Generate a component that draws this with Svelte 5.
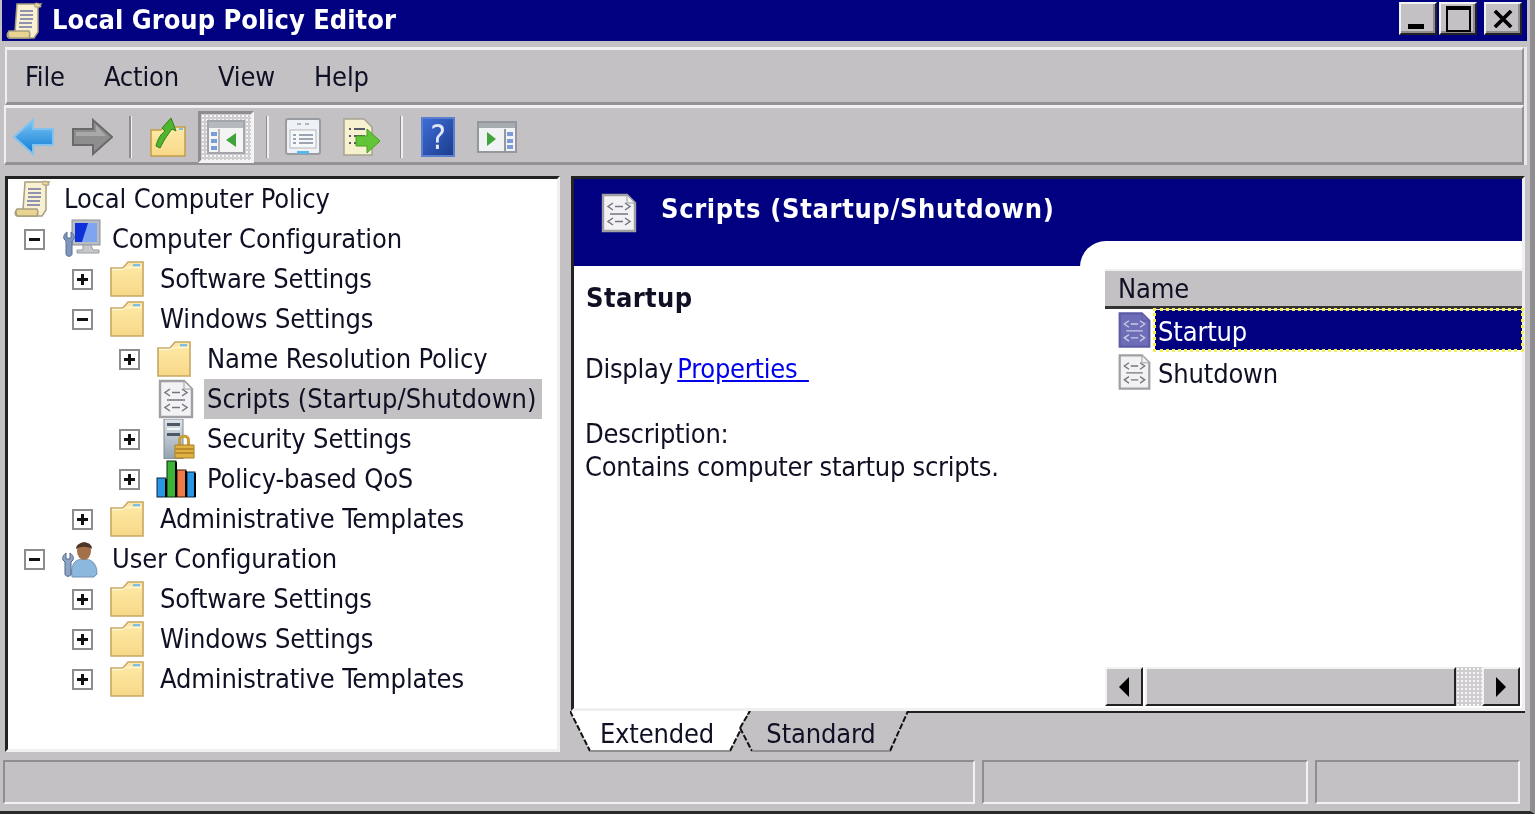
<script>
  const tree = [
    { level: 0, icon: 'scroll', label: 'Local Computer Policy' },
    { level: 1, box: 'minus', icon: 'computer', label: 'Computer Configuration' },
    { level: 2, box: 'plus', icon: 'folder', label: 'Software Settings' },
    { level: 2, box: 'minus', icon: 'folder', label: 'Windows Settings' },
    { level: 3, box: 'plus', icon: 'folder', label: 'Name Resolution Policy' },
    { level: 3, icon: 'script', label: 'Scripts (Startup/Shutdown)', selected: true },
    { level: 3, box: 'plus', icon: 'security', label: 'Security Settings' },
    { level: 3, box: 'plus', icon: 'qos', label: 'Policy-based QoS' },
    { level: 2, box: 'plus', icon: 'folder', label: 'Administrative Templates' },
    { level: 1, box: 'minus', icon: 'user', label: 'User Configuration' },
    { level: 2, box: 'plus', icon: 'folder', label: 'Software Settings' },
    { level: 2, box: 'plus', icon: 'folder', label: 'Windows Settings' },
    { level: 2, box: 'plus', icon: 'folder', label: 'Administrative Templates' }
  ];
</script>

{#snippet scroll()}
  <svg class="icon" viewBox="0 0 40 40">
    <path d="M12 3h24l-3 4v24l-4 6H4c-2-1-3-4 0-6h6z" fill="#f8f0d0" stroke="#a89f80" stroke-width="1.5" />
    <path d="M31 2c3 0 5 2 5 4h-6c-1-2 0-4 1-4z" fill="#e6d597" stroke="#a89f80" />
    <path d="M4 30h20c1 2 1 5 0 7H5c-2-1-3-5-1-7z" fill="#e8d690" stroke="#a89f80" stroke-width="1.5" />
    <path d="M15 10h13M15 14h13M15 18h13M14 22h13M14 26h13" stroke="#8f93ad" stroke-width="2" />
  </svg>
{/snippet}

{#snippet computer()}
  <svg class="icon" viewBox="0 0 40 40">
    <rect x="11" y="1" width="28" height="25" fill="#b9bcc2" stroke="#8d9096" />
    <rect x="14" y="4" width="22" height="19" fill="#0f2fd8" />
    <path d="M27 4h9v19H21z" fill="#7fa5f0" />
    <path d="M22 26h8l2 5h6v3H16v-3h6z" fill="#c6c8cc" stroke="#9a9ca0" />
    <path d="M6 13c-3 2-4 5-3 7l2 2v13c0 3 6 3 6 0V22l2-2c1-2 0-5-3-7v6H6z" fill="#7d96bd" stroke="#5b6f92" />
  </svg>
{/snippet}

{#snippet folder()}
  <svg class="icon" viewBox="0 0 40 40">
    <path d="M2 37V9h12l5-6h15v34z" fill="url(#folderFill)" stroke="#c8a764" stroke-width="1.6" />
    <rect x="24" y="5" width="7" height="2.5" fill="#7dbde8" />
    <path d="M3 10.500h11l3-2h16" fill="none" stroke="#fff6d2" stroke-width="1.500" />
  </svg>
{/snippet}

{#snippet script(paper = '#f2f2f4', line = '#74767f', edge = '#a0a0a4')}
  <svg class="icon" viewBox="0 0 40 40">
    <path d="M4 2h24l8 8v28H4z" fill={paper} stroke={edge} stroke-width="2.4" />
    <path d="M28 2v8h8z" fill={paper} stroke={edge} />
    <path d="M14 10l-5 3.500 5 3.500M16 13.500h8M26 10l5 3.500-5 3.500M11 21h18M14 25l-5 3.500 5 3.500M16 28.500h8M26 25l5 3.500-5 3.500" fill="none" stroke={line} stroke-width="1.500" />
  </svg>
{/snippet}

{#snippet security()}
  <svg class="icon" viewBox="0 0 40 40">
    <path d="M8 0h19v40H8z" fill="url(#towerFill)" stroke="#7f8b96" />
    <path d="M11 4h13v3H11zM11 14h13v3H11z" fill="#4d5864" />
    <path d="M11 9h13v2H11z" fill="#f2f4f6" />
    <path d="M22 26v-5c0-7 12-7 12 0v5h-3v-5c0-3-6-3-6 0v5z" fill="#c99f3a" />
    <path d="M19 26h19v13H19z" fill="#e0b243" stroke="#a87f22" />
    <path d="M19 30h19M19 34h19" stroke="#b98d2b" stroke-width="2" />
  </svg>
{/snippet}

{#snippet qos()}
  <svg class="icon" viewBox="0 0 40 40">
    <rect x="1" y="19" width="9" height="19" fill="#2b96e4" stroke="#08243f" />
    <rect x="11" y="2" width="9" height="36" fill="#3bb336" stroke="#0b2b0b" />
    <rect x="21" y="11" width="9" height="27" fill="#f0794a" stroke="#3b1609" />
    <rect x="31" y="13" width="8" height="25" fill="#2b96e4" stroke="#08243f" />
    <path d="M10 20v18M20 3v35M30 12v26M39 14v24" stroke="#000" stroke-width="2" />
  </svg>
{/snippet}

{#snippet user()}
  <svg class="icon" viewBox="0 0 40 40">
    <path d="M11 38c-2-16 6-18 12-18s13 3 13 15l-3 3z" fill="#8db8de" stroke="#6e93b5" />
    <ellipse cx="23" cy="12" rx="7" ry="9" fill="#a3704a" />
    <path d="M15 10c0-8 16-9 16 0-4-3-12-3-16 0z" fill="#4a3527" />
    <path d="M5 14c-3 2-4 5-3 7l2 2v12c0 3 6 3 6 0V23l2-2c1-2 0-5-3-7v6H5z" fill="#8ea4c6" stroke="#4f6488" />
  </svg>
{/snippet}

{#snippet treeIcon(name)}
  {#if name === 'scroll'}{@render scroll()}
  {:else if name === 'computer'}{@render computer()}
  {:else if name === 'folder'}{@render folder()}
  {:else if name === 'script'}{@render script()}
  {:else if name === 'security'}{@render security()}
  {:else if name === 'qos'}{@render qos()}
  {:else}{@render user()}{/if}
{/snippet}

<svg class="defs" aria-hidden="true">
  <defs>
    <linearGradient id="folderFill" x1="0" y1="0" x2="0" y2="1">
      <stop offset="0" stop-color="#fdeaa8" />
      <stop offset="1" stop-color="#f8d888" />
    </linearGradient>
    <linearGradient id="towerFill" x1="0" y1="0" x2="0" y2="1">
      <stop offset="0" stop-color="#dfe5ea" />
      <stop offset="1" stop-color="#93a3b0" />
    </linearGradient>
    <linearGradient id="backFill" x1="0" y1="0" x2="0" y2="1">
      <stop offset="0" stop-color="#7cc6f4" />
      <stop offset="1" stop-color="#0f7ad6" />
    </linearGradient>
    <linearGradient id="helpFill" x1="0" y1="0" x2="1" y2="1">
      <stop offset="0" stop-color="#3e6fd8" />
      <stop offset="1" stop-color="#1c3a8c" />
    </linearGradient>
  </defs>
</svg>

<div class="window">
  <header class="titlebar">
    <div class="title-icon">{@render scroll()}</div>
    <span class="title-text">Local Group Policy Editor</span>
    <div class="caption">
      <button class="cap" aria-label="Minimize"><span class="min"></span></button>
      <button class="cap" aria-label="Maximize"><span class="max"></span></button>
      <button class="cap close" aria-label="Close">
        <svg viewBox="0 0 24 20" width="22" height="18"><path d="M3 1l18 18M21 1L3 19" stroke="#000" stroke-width="4" /></svg>
      </button>
    </div>
  </header>

  <nav class="menubar">
    <span>File</span><span>Action</span><span>View</span><span>Help</span>
  </nav>

  <div class="toolbar">
    <div class="tool w56">
      <svg width="42" height="38" viewBox="0 0 42 38"><path d="M1 19L20 2v9h20v16H20v9z" fill="url(#backFill)" stroke="#84c2ee" stroke-width="2" /></svg>
    </div>
    <div class="tool w56">
      <svg width="42" height="38" viewBox="0 0 42 38"><path d="M41 19L22 2v9H2v16h20v9z" fill="#8e8e8e" stroke="#6a6a6a" stroke-width="2" /><path d="M5 14h20V7l10 11H5z" fill="#a9a9a9" /></svg>
    </div>
    <div class="sep s16"></div>
    <div class="tool w56">
      <svg width="38" height="42" viewBox="0 0 38 42"><path d="M2 40V14h10l3-3h21v29z" fill="url(#folderFill)" stroke="#c29c4a" stroke-width="1.500" /><path d="M30 12h4v2h-4z" fill="#7dbde8" /><path d="M7 30c2-8 5-12 9-15l-3-3 9-10 5 13-4-2c-3 4-7 9-12 19z" fill="#4fb52f" stroke="#2f7d1b" /></svg>
    </div>
    <div class="tool w56 pressed">
      <svg width="38" height="34" viewBox="0 0 38 34"><rect x="1" y="1" width="36" height="32" fill="#f4f4f4" stroke="#a4a6ac" stroke-width="2" /><rect x="2" y="2" width="34" height="6" fill="#b6b9bf" /><path d="M12 9v23" stroke="#b4b6bc" stroke-width="2" /><path d="M4 12h6v4H4zM4 19h6v4H4zM4 26h6v4H4z" fill="#7c9cd8" /><path d="M29 13v14l-10-7z" fill="#3fa53a" /></svg>
    </div>
    <div class="sep s22"></div>
    <div class="tool w46">
      <svg width="36" height="38" viewBox="0 0 36 38"><rect x="1" y="1" width="34" height="35" rx="2" fill="#eef1f5" stroke="#9a9ca2" stroke-width="2" /><path d="M12 6h4M20 6h4" stroke="#b4b6bb" stroke-width="2" /><rect x="5" y="12" width="26" height="18" fill="#f7f8fa" stroke="#b4b6bb" /><path d="M8 17h3M14 17h14M8 21h3M14 21h14M8 25h3M14 25h14" stroke="#7f8a9c" stroke-width="1.500" /><path d="M12 33h12v3H12z" fill="#58b7e8" /></svg>
    </div>
    <div class="tool w66">
      <svg width="40" height="40" viewBox="0 0 40 40"><path d="M3 2h20l8 8v28H3z" fill="#f8f1cf" stroke="#a6a38e" stroke-width="1.500" /><path d="M8 12h2M13 12h11M8 19h2M13 19h11M8 26h2M13 26h8" stroke="#55586a" stroke-width="2" /><path d="M15 19h11v-7l13 12-13 12v-7H15z" fill="#62c437" stroke="#4a9a27" /></svg>
    </div>
    <div class="sep s10"></div>
    <div class="tool w60">
      <svg width="34" height="40" viewBox="0 0 34 40"><rect x="1" y="1" width="32" height="38" fill="url(#helpFill)" stroke="#5a7fd0" stroke-width="2" /><text x="17" y="32" text-anchor="middle" class="help-mark">?</text></svg>
    </div>
    <div class="tool w54">
      <svg width="40" height="32" viewBox="0 0 40 32"><rect x="1" y="1" width="38" height="30" fill="#f0f2f4" stroke="#94989e" stroke-width="2" /><rect x="2" y="2" width="36" height="5" fill="#a7abb2" /><path d="M28 8v22" stroke="#94989e" stroke-width="2" /><path d="M30 11h6v4h-6zM30 18h6v4h-6zM30 24h6v4h-6z" fill="#7c9cd8" /><path d="M10 11v14l9-7z" fill="#3fa53a" /></svg>
    </div>
  </div>

  <div class="panes">
    <aside class="tree">
      {#each tree as row}
        <div class="row level{row.level}">
          <span class="box-slot">
            {#if row.box}
              <span class="box"><i class="h"></i>{#if row.box === 'plus'}<i class="v"></i>{/if}</span>
            {/if}
          </span>
          <span class="icon-slot">{@render treeIcon(row.icon)}</span>
          <span class="label" class:selected={row.selected}>{row.label}</span>
        </div>
      {/each}
    </aside>

    <section class="detail">
      <div class="view">
        <div class="view-head">
          <span class="head-icon">{@render script()}</span>
          <h1>Scripts (Startup/Shutdown)</h1>
        </div>
        <div class="view-body">
          <div class="info">
            <h2>Startup</h2>
            <p class="display">Display <a href="#props">Properties&nbsp;</a></p>
            <p class="desc">Description:<br />Contains computer startup scripts.</p>
          </div>
          <div class="list">
            <div class="list-head">Name</div>
            <div class="item on">
              <span class="item-icon">{@render script('#6d6db8', '#c9c9e6', '#5c5ca6')}</span>
              <span class="item-label">Startup</span>
            </div>
            <div class="item">
              <span class="item-icon">{@render script()}</span>
              <span class="item-label">Shutdown</span>
            </div>
            <div class="hscroll">
              <button class="sb" aria-label="Left"><i class="arrow left"></i></button>
              <div class="thumb"></div>
              <div class="dither"></div>
              <button class="sb" aria-label="Right"><i class="arrow right"></i></button>
            </div>
          </div>
        </div>
      </div>
      <div class="tabs">
        <div class="tab active">
          <svg class="tab-bg" viewBox="0 0 180 41"><path d="M0 0L20 40H160L180 0z" fill="#fff" /><path d="M0 0L20 40M160 40L180 0" stroke="#111" stroke-width="2" stroke-dasharray="6 2" fill="none" /><path d="M20 40H160" stroke="#8f8d8f" stroke-width="2" /></svg>
          <span>Extended</span>
        </div>
        <div class="tab">
          <svg class="tab-bg" viewBox="0 0 172 41"><path d="M2 17L14 40H152L170 0H12z" fill="#c3c1c3" /><path d="M2 17L14 40M152 40L170 0M2 17L12 0" stroke="#111" stroke-width="2" stroke-dasharray="6 2" fill="none" /><path d="M14 40H152" stroke="#8f8d8f" stroke-width="2" /></svg>
          <span>Standard</span>
        </div>
      </div>
    </section>
  </div>

  <footer class="status">
    <div class="cell wide"></div>
    <div class="cell mid"></div>
    <div class="cell last"></div>
  </footer>
</div>

<style>
  :global(body) {
    margin: 0;
    background: #c3c1c3;
  }

  .defs {
    position: absolute;
    width: 0;
    height: 0;
  }

  .window {
    width: 1535px;
    height: 814px;
    overflow: hidden;
    box-sizing: border-box;
    background: #c3c1c3;
    border-bottom: 3px solid #2a2a2a;
    border-right: 5px solid #8f8d8f;
    font-family: "DejaVu Sans", "Noto Sans", sans-serif;
    font-stretch: condensed;
    font-size: 27px;
    letter-spacing: -0.15px;
    color: #101024;
    display: flex;
    flex-direction: column;
    filter: blur(0.6px);
  }

  .titlebar {
    height: 41px;
    flex: none;
    margin: 0 3px 0 2px;
    background: #000080;
    display: flex;
    align-items: center;
    color: #fff;
    font-weight: bold;
    letter-spacing: 0;
    position: relative;
  }

  .title-icon {
    width: 40px;
    height: 40px;
    margin-left: 3px;
  }

  .title-text {
    margin-left: 7px;
    margin-top: -3px;
  }

  .caption {
    position: absolute;
    top: 2px;
    right: 5px;
    display: flex;
    gap: 2px;
  }

  .cap {
    width: 38px;
    height: 33px;
    padding: 0;
    background: #c3c1c3;
    border: 2px solid;
    border-color: #f2f2f2 #222 #222 #f2f2f2;
    box-shadow: inset -2px -2px 0 #8f8d8f;
    position: relative;
    display: flex;
    align-items: center;
    justify-content: center;
  }

  .close {
    margin-left: 5px;
  }

  .min {
    position: absolute;
    left: 7px;
    bottom: 4px;
    width: 16px;
    height: 5px;
    background: #000;
  }

  .max {
    width: 21px;
    height: 20px;
    border: 2px solid #000;
    border-top-width: 4px;
  }

  .menubar {
    height: 58px;
    flex: none;
    box-sizing: border-box;
    margin: 6px 6px 0 5px;
    border-top: 3px solid #f0f0f0;
    border-left: 2px solid #f0f0f0;
    border-bottom: 3px solid #939193;
    border-right: 2px solid #939193;
    box-shadow: 3px 0 0 #e8e8e8;
    display: flex;
    align-items: center;
    gap: 39px;
    padding-left: 18px;
  }

  .toolbar {
    height: 60px;
    flex: none;
    box-sizing: border-box;
    margin: 0 6px 0 5px;
    border-top: 3px solid #f0f0f0;
    border-left: 2px solid #f0f0f0;
    border-bottom: 3px solid #939193;
    border-right: 2px solid #939193;
    box-shadow: 3px 0 0 #e8e8e8;
    display: flex;
    align-items: center;
    gap: 2px;
    padding-top: 4px;
    margin-left: 4px;
  }

  .tool {
    height: 52px;
    display: flex;
    align-items: center;
    justify-content: center;
    flex: none;
  }

  .w46 { width: 46px; }
  .w54 { width: 54px; }
  .w56 { width: 56px; }
  .w60 { width: 60px; }
  .w66 { width: 66px; }

  .pressed {
    box-sizing: border-box;
    border: 3px solid;
    border-color: #8f8d8f #f4f4f4 #f4f4f4 #8f8d8f;
    background: radial-gradient(#f6f6f6 45%, #cfcdcf 50%) 0 0 / 4px 4px;
  }

  .sep {
    height: 42px;
    flex: none;
    position: relative;
  }

  .sep::after {
    content: "";
    position: absolute;
    left: 50%;
    top: 0;
    bottom: 0;
    width: 3px;
    margin-left: -1px;
    background: linear-gradient(90deg, #8f8d8f 50%, #f0f0f0 50%);
  }

  .s10 { width: 10px; }
  .s16 { width: 16px; }
  .s22 { width: 22px; }

  .help-mark {
    font-size: 33px;
    fill: #dfe6f6;
    font-family: "DejaVu Sans", sans-serif;
  }

  .panes {
    flex: 1;
    min-height: 0;
    display: flex;
    gap: 11px;
    margin: 11px 0 0 5px;
  }

  .tree {
    width: 555px;
    height: 576px;
    flex: none;
    box-sizing: border-box;
    background: #fff;
    border: 3px solid;
    border-color: #222 #f0f0f0 #f0f0f0 #222;
    padding-left: 6px;
  }

  .row {
    height: 40px;
    display: flex;
    align-items: center;
  }

  .level1 { padding-left: 11px; }
  .level2 { padding-left: 59px; }
  .level3 { padding-left: 106px; }

  .level0 .box-slot {
    display: none;
  }

  .box-slot {
    width: 37px;
    flex: none;
  }

  .box {
    display: block;
    width: 21px;
    height: 21px;
    box-sizing: border-box;
    border: 2px solid #8d8d8d;
    position: relative;
    background: #fff;
    margin-left: -1px;
  }

  .box i {
    position: absolute;
    background: #111;
  }

  .box .h {
    left: 3px;
    right: 3px;
    top: 7px;
    height: 3px;
  }

  .box .v {
    top: 3px;
    bottom: 3px;
    left: 7px;
    width: 3px;
  }

  .icon-slot {
    width: 50px;
    flex: none;
    display: flex;
  }

  .icon {
    width: 40px;
    height: 40px;
    display: block;
  }

  .icon-slot .icon {
    margin-left: -1px;
  }

  .label {
    padding: 0 6px 0 0;
    white-space: nowrap;
    line-height: 40px;
  }

  .label.selected {
    background: #c3c1c3;
    margin-left: -3px;
    padding: 0 6px 0 3px;
    letter-spacing: 0;
  }

  .detail {
    width: 954px;
    flex: none;
    height: 576px;
    display: flex;
    flex-direction: column;
  }

  .view {
    height: 535px;
    flex: none;
    box-sizing: border-box;
    background: #fff;
    border: 3px solid;
    border-color: #222 #f0f0f0 #f0f0f0 #222;
    display: flex;
    flex-direction: column;
  }

  .view-head {
    height: 87px;
    flex: none;
    background: #000080;
    color: #fff;
    display: flex;
    align-items: flex-start;
  }

  .head-icon {
    margin: 14px 0 0 25px;
  }

  h1 {
    margin: 10px 0 0 22px;
    font-size: 27px;
    font-weight: bold;
    line-height: 40px;
    letter-spacing: 0.65px;
  }

  .view-body {
    flex: 1;
    min-height: 0;
    display: flex;
  }

  .info {
    width: 506px;
    flex: none;
    box-sizing: border-box;
    padding: 14px 0 0 11px;
    line-height: 33px;
    letter-spacing: -0.25px;
  }

  h2 {
    margin: 0 0 0 1px;
    font-size: 27px;
    line-height: 35px;
    font-weight: bold;
    letter-spacing: 0.4px;
  }

  .display {
    margin: 38px 0 0;
    line-height: 32px;
    word-spacing: -3px;
  }

  a {
    color: #0000ee;
    word-spacing: 4px;
  }

  .desc {
    margin: 32px 0 0;
  }

  .list {
    flex: 1;
    margin-top: -25px;
    padding: 28px 0 0 25px;
    background: #fff;
    border-top-left-radius: 26px;
    display: flex;
    flex-direction: column;
    position: relative;
  }

  .list-head {
    height: 40px;
    flex: none;
    box-sizing: border-box;
    background: #c3c1c3;
    border-bottom: 3px solid #333;
    border-top: 2px solid #f0f0f0;
    padding-left: 13px;
    line-height: 35px;
  }

  .item {
    height: 42px;
    display: flex;
    align-items: center;
    padding-left: 11px;
  }

  .item-icon {
    width: 39px;
    flex: none;
  }

  .item-icon .icon {
    width: 37px;
    height: 38px;
  }

  .item-label {
    height: 40px;
    line-height: 44px;
    padding-left: 3px;
  }

  .on .item-label {
    flex: 1;
    background: #000080;
    color: #fff;
    outline: 3px dotted #f4ee50;
    outline-offset: -1px;
  }

  .hscroll {
    position: absolute;
    left: 25px;
    right: 2px;
    bottom: 2px;
    height: 39px;
    display: flex;
  }

  .sb {
    width: 38px;
    flex: none;
    padding: 0;
    background: #c3c1c3;
    border: 2px solid;
    border-color: #f2f2f2 #222 #222 #f2f2f2;
    display: flex;
    align-items: center;
    justify-content: center;
  }

  .thumb {
    width: 311px;
    margin-left: 2px;
    flex: none;
    box-sizing: border-box;
    background: #c3c1c3;
    border: 2px solid;
    border-color: #f2f2f2 #222 #222 #f2f2f2;
  }

  .dither {
    flex: 1;
    background: radial-gradient(#f6f6f6 45%, #cfcdcf 50%) 0 0 / 4px 4px;
  }

  .arrow {
    width: 0;
    height: 0;
    border-top: 10px solid transparent;
    border-bottom: 10px solid transparent;
  }

  .arrow.left {
    border-right: 10px solid #000;
  }

  .arrow.right {
    border-left: 10px solid #000;
  }

  .tabs {
    height: 41px;
    flex: none;
    display: flex;
    border-top: 2px solid #222;
    box-sizing: border-box;
  }

  .tab {
    position: relative;
    width: 180px;
    margin: -2px 0 0 -1px;
    height: 41px;
    display: flex;
    align-items: center;
    justify-content: center;
    flex: none;
  }

  .tab + .tab {
    width: 172px;
    margin-left: -12px;
  }

  .tab-bg {
    position: absolute;
    inset: 0;
    width: 100%;
    height: 100%;
  }

  .tab span {
    position: relative;
    top: 2px;
    right: 3px;
  }

  .status {
    height: 44px;
    flex: none;
    margin: 8px 0 7px 3px;
    display: flex;
    gap: 7px;
  }

  .cell {
    box-sizing: border-box;
    border: 2px solid;
    border-color: #8f8d8f #f2f2f2 #f2f2f2 #8f8d8f;
  }

  .wide { width: 972px; }
  .mid { width: 326px; }
  .last { width: 205px; }
</style>
